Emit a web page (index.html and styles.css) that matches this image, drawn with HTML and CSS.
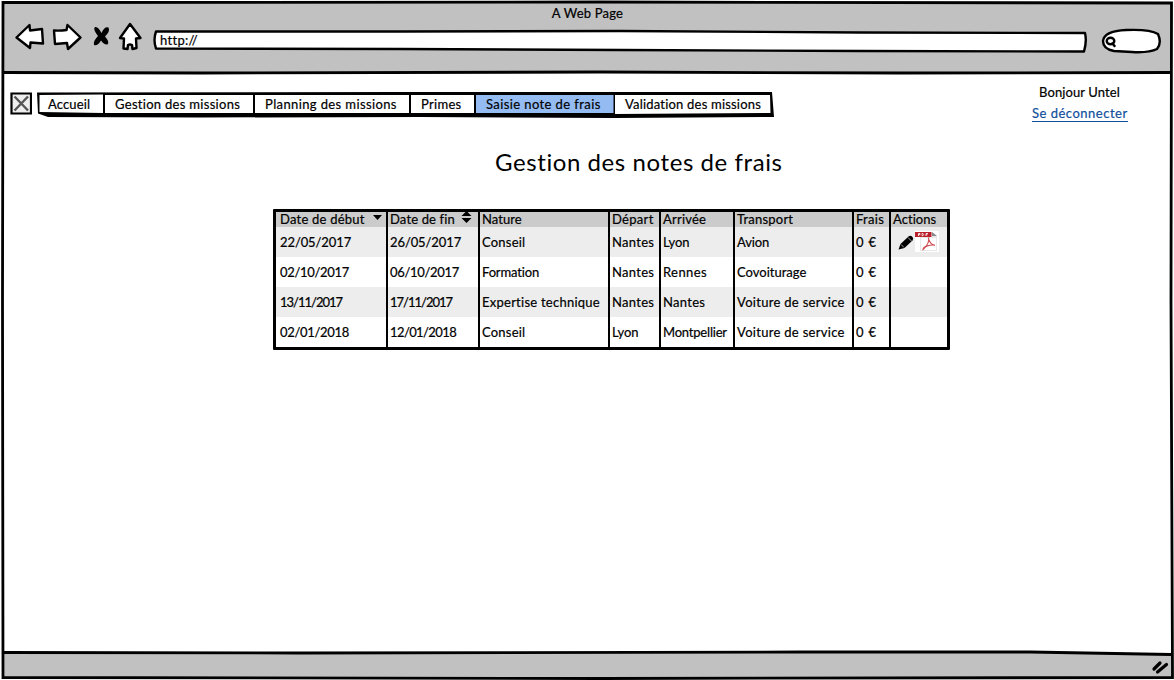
FILE: index.html
```html
<!DOCTYPE html>
<html lang="fr">
<head>
<meta charset="utf-8">
<title>Gestion des notes de frais</title>
<link rel="stylesheet" href="styles.css">
</head>
<body>
<div class="window">
  <header class="chrome">
    <div class="chrome-title">A Web Page</div>
    <div class="toolbar">
      <svg class="tools" width="128" height="32" viewBox="14 21 128 32">
        <path class="ink" d="M16.500 37.500 L29.500 25 L30 30.500 L42 29 L43 43.500 L30.500 42.500 L30 48 Z"/>
        <path class="ink" d="M54 30.500 Q60 31 66.500 30 L67.500 25 L80.500 37.500 L68 49 L67 43 L55 44 Z"/>
        <path class="solid" d="M95 27 Q98 26 101.500 33 Q104.500 26 108.500 27.500 Q110.500 31 105 36.500 Q110 42 107.500 44.500 Q104 45 101 40.500 Q97.500 46.500 94 45 Q93 41 98 36 Q92.500 29 95 27 Z"/>
        <path class="ink" d="M130 24 L120 38 L124 38.500 L123.500 48.500 L127.500 49 L128 45 Q130 44 132 45 L132.500 49 L136.500 48 L136 38.500 L140.500 38 Z"/>
      </svg>
      <div class="address">
        <svg class="backing" width="934" height="24" viewBox="153 29 934 24"><path class="ink" d="M156 31.500 L400 31.500 L620 31 L860 32.500 L1085 33 Q1087 41 1084 51.500 L860 51 L620 50 L400 49 L156 48.500 Q153 40 156 31.500 Z"/></svg>
        <span class="t-http">http://</span>
      </div>
      <svg class="search" width="62" height="28" viewBox="1100 27 62 28">
        <path class="ink" d="M1103 41 Q1104 31 1126 30 Q1150 29 1158 34 Q1162 43 1157 49 Q1149 53 1132 52 L1114 51 Q1103 49 1103 41 Z"/>
        <ellipse class="ink" cx="1110.500" cy="41" rx="3.800" ry="3.200"/><path class="ink" d="M1112.500 43.500 L1114.500 46"/>
      </svg>
    </div>
  </header>
  <main class="page">
    <div class="topbar">
      <svg class="placeholder" width="22" height="24" viewBox="10 91 22 24"><path class="box" d="M11.500 93.500 H31 V113.500 H11.500 Z"/><path class="cross" d="M14.500 96.500 L28 110.500 M28 96.500 L14.500 110.500"/></svg>
      <nav class="menu">
        <svg class="backing" width="738" height="28" viewBox="37 91 738 28">
          <path class="solid" d="M37 92.500 L400 92 L772 92 L774 117 L614 118 L420 117 L200 117.500 L48 117 L38 113.500 Z"/>
          <path class="paper" d="M39.500 95 L103 94.500 V113 L39.500 112 Z M105 95 H253 V113 H105 Z M255 95 H409 V113 H255 Z M411 95 H474 V113 H411 Z M615 95 H770 L770.500 113 L615 114 Z"/>
          <path class="chosen" d="M476 95 H613.500 V113 H476 Z"/>
        </svg>
        <a class="t-m1">Accueil</a><a class="t-m2">Gestion des missions</a><a class="t-m3">Planning des missions</a><a class="t-m4">Primes</a><a class="t-m5">Saisie note de frais</a><a class="t-m6">Validation des missions</a>
      </nav>
      <div class="account"><span class="t-hi">Bonjour Untel</span><a class="logout"><span class="t-out">Se déconnecter</span></a></div>
    </div>
    <h1><span class="t-h1">Gestion des notes de frais</span></h1>
    <div class="table">
      <div class="row head">
        <div><span class="t-debut">Date de début</span><svg class="sort" width="11" height="14"><path d="M1 5 H10 L5.500 10 Z"/></svg></div>
        <div><span class="t-fin">Date de fin</span><svg class="sort both" width="11" height="14"><path d="M.5 6 L5.500 1 L10.500 6 Z M.5 8 H10.500 L5.500 13 Z"/></svg></div>
        <div><span class="t-nature">Nature</span></div><div><span class="t-depart">Départ</span></div><div><span class="t-arr">Arrivée</span></div><div><span class="t-trans">Transport</span></div><div><span class="t-frais">Frais</span></div><div><span class="t-act">Actions</span></div>
      </div>
      <div class="row odd">
        <div><span class="t-date">22/05/2017</span></div><div><span class="t-date">26/05/2017</span></div><div><span class="t-cons">Conseil</span></div><div><span class="t-nantes">Nantes</span></div><div><span class="t-lyon">Lyon</span></div><div><span class="t-avion">Avion</span></div><div><span class="t-eur">0 €</span></div>
        <div class="actions">
          <svg width="16" height="15" viewBox="0 0 16 15"><path d="M.5 14.500 L2.500 9 L10.500 1.500 Q12.500 0 14.500 2 Q16 3.500 14.500 5.500 L6.500 13 Z"/><path class="gap" d="M10 2.500 L13.500 6 M3 9.500 L6 12.500"/></svg>
          <svg width="24" height="21" viewBox="0 0 24 21"><path fill="#fff" d="M0 0 H24 V21 H0 Z"/><path fill="#e8e8e8" d="M5 6 H17 V1 L22 5 V20 H5 Z"/><path fill="#fff" d="M6 7 H21 V19 H6 Z"/><path fill="#888" d="M17 1 L22 5 H17 Z"/><path fill="#b9202b" d="M0 1 H16.500 V6 H0 Z"/><path class="pdf-mark" d="M3.500 2.500 v2.500 M3.500 2.500 h1.500 v1.200 h-1.500 M7 2.500 h1 l.8 1 l-.8 1.200 h-1 z M11 5 V2.500 h2 M11 3.700 h1.500"/><path class="acrobat" d="M13.500 6.500 C14.500 10 13 14 8 18.500 C8 16 14 13.500 20 14 C17 15 13.500 10 13.500 6.500"/></svg>
        </div>
      </div>
      <div class="row">
        <div><span class="t-date b">02/10/2017</span></div><div><span class="t-date b">06/10/2017</span></div><div><span class="t-form">Formation</span></div><div><span class="t-nantes">Nantes</span></div><div><span class="t-rennes">Rennes</span></div><div><span class="t-cov">Covoiturage</span></div><div><span class="t-eur">0 €</span></div><div></div>
      </div>
      <div class="row odd">
        <div><span class="t-date c">13/11/2017</span></div><div><span class="t-date c">17/11/2017</span></div><div><span class="t-exp">Expertise technique</span></div><div><span class="t-nantes">Nantes</span></div><div><span class="t-nantes">Nantes</span></div><div><span class="t-voit">Voiture de service</span></div><div><span class="t-eur">0 €</span></div><div></div>
      </div>
      <div class="row">
        <div><span class="t-date b">02/01/2018</span></div><div><span class="t-date d">12/01/2018</span></div><div><span class="t-cons">Conseil</span></div><div><span class="t-lyon">Lyon</span></div><div><span class="t-mont">Montpellier</span></div><div><span class="t-voit">Voiture de service</span></div><div><span class="t-eur">0 €</span></div><div></div>
      </div>
    </div>
  </main>
  <footer class="status"><svg width="18" height="16" viewBox="1151 659 18 16"><path class="grip" d="M1154 669 L1160 663 M1157.500 672 L1166.500 664.500"/></svg></footer>
  <svg class="frame" width="1174" height="680"><path d="M3 2.500 L600 2 L1171.500 3 L1171 300 L1172.500 677.500 L600 678.500 L3 677.500 L2.500 300 Z"/><path d="M3 72.500 L200 73 L600 72 L900 73 L1171 72.500"/><path d="M3 652.500 L300 653 L800 652 L1030 652 L1171 654.500"/></svg>
</div>
</body>
</html>
```
FILE: styles.css
```css
* { box-sizing: border-box; }
body { margin: 0; background: #fff; color: #000; font: 13px/18px Lato, "Open Sans", sans-serif; font-variant-ligatures: none; -webkit-text-stroke: .2px; }
.window { position: relative; display: flex; flex-direction: column; width: 1174px; height: 680px; overflow: hidden; }
.chrome { height: 71px; margin: 2px 2px 0; padding: 2px 0 0 1px; background: #c1c1c1; }
.chrome-title { text-align: center; letter-spacing: .2px; }
.toolbar { display: flex; align-items: flex-start; padding-left: 11px; }
.tools { margin-top: -1px; }
.address { position: relative; margin: 7px 0 0 11px; width: 934px; height: 24px; padding: 2px 0 0 7px; }
.address span { position: relative; }
.search { margin: 5px 0 0 13px; }
.backing { position: absolute; left: 0; top: 0; }
.ink { fill: #fff; stroke: #000; stroke-width: 2.4; stroke-linejoin: round; stroke-linecap: round; }
.solid { fill: #000; }
.paper { fill: #fff; }
.chosen { fill: #94bbf2; }
.frame { position: absolute; inset: 0; pointer-events: none; fill: none; stroke: #000; stroke-width: 2.8; }
.page { flex: 1; }
.topbar { display: flex; align-items: flex-start; padding: 18px 0 0 10px; height: 66px; }
.placeholder .box { fill: #eee; stroke: #000; stroke-width: 2.2; }
.placeholder .cross { stroke: #555; stroke-width: 2.4; }
.menu { position: relative; display: grid; grid-template-columns: 67px 150px 156px 65px 139px 158px; margin-left: 5px; padding-top: 4px; width: 738px; height: 28px; }
.menu a { position: relative; padding-left: 11px; white-space: nowrap; }
.account { display: flex; flex-direction: column; align-items: flex-start; margin: -8px 0 0 257px; white-space: nowrap; }
.account > span { margin-left: 7px; }
.logout { height: 18px; width: 96px; margin-top: 3px; color: #10509c; border-bottom: 1px solid #10509c; }
h1 { margin: 8px 0 0; padding-left: 495px; height: 62px; font-size: 24px; line-height: 30px; font-weight: 400; white-space: nowrap; -webkit-text-stroke: 0; }
.table { width: 677px; height: 141px; margin-left: 273px; border: 3px solid #000; border-radius: 1px; }
.row { display: grid; grid-template-columns: 112px 92px 130px 51px 74px 119px 37px 56px; height: 30px; line-height: 30px; white-space: nowrap; }
.row > div { border-right: 2px solid #000; padding-left: 2px; display: flex; }
.row > div:first-child { padding-left: 4px; }
.row > div:last-child { border-right: 0; }
.head { height: 15px; line-height: 15px; background: #cbcbcb; }
.head .sort { margin: -2px 3px 0 auto; }
.head .both { margin: -2px 6px 0 auto; overflow: visible; }
.odd { background: #ededed; }
.row > .actions { padding: 4px 0 0 7px; gap: 1px; }
.actions svg:first-child { margin-top: 4px; }
.gap { stroke: #ededed; stroke-width: .7; }
.pdf-mark { fill: none; stroke: #fff; stroke-width: .8; }
.acrobat { fill: none; stroke: #cf4a4f; stroke-width: 1.1; }
.status { display: flex; justify-content: flex-end; height: 25px; margin: 0 2px 2px; padding: 6px 3px 0 0; background: #c1c1c1; }
.grip { stroke: #000; stroke-width: 3.2; stroke-linecap: round; }

/* Tracking per label */
.t-http { letter-spacing: .3px; }
.t-m1 { letter-spacing: .15px; }
.t-m2 { letter-spacing: .3px; }
.t-m3 { letter-spacing: .38px; }
.t-m4 { letter-spacing: .3px; }
.t-m5 { letter-spacing: .4px; }
.t-m6 { letter-spacing: .2px; }
.t-hi { letter-spacing: .1px; }
.t-out { letter-spacing: .5px; }
.t-h1 { letter-spacing: .58px; }
.t-debut { letter-spacing: .23px; }
.t-fin { letter-spacing: .15px; }
.t-nature, .t-act { letter-spacing: .05px; }
.t-depart, .t-nantes, .t-frais, .t-voit { letter-spacing: .3px; }
.t-arr, .t-trans, .t-cons { letter-spacing: .22px; }
.t-exp { letter-spacing: .25px; }
.t-rennes { letter-spacing: .4px; }
.t-eur { letter-spacing: .8px; }
.t-form, .t-avion { letter-spacing: -.15px; }
.t-mont { letter-spacing: -.2px; }
.t-date { letter-spacing: -.1px; }
.t-date.b { letter-spacing: -.3px; }
.t-date.c { letter-spacing: -1px; }
.t-date.d { letter-spacing: -.6px; }
```
